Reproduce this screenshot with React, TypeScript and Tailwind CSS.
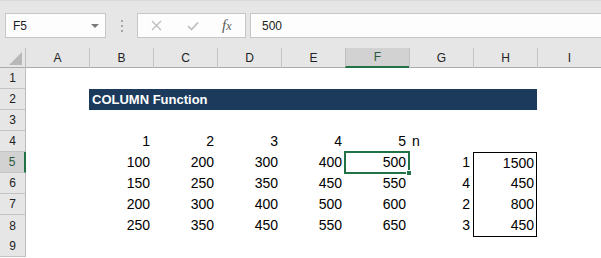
import React from "react";

const COLS = ["A", "B", "C", "D", "E", "F", "G", "H", "I"];

// A..I values for the rows below the title band
const DATA: Record<number, string[]> = {
  4: ["", "1", "2", "3", "4", "5", "n", "", ""],
  5: ["", "100", "200", "300", "400", "500", "1", "1500", ""],
  6: ["", "150", "250", "350", "450", "550", "4", "450", ""],
  7: ["", "200", "300", "400", "500", "600", "2", "800", ""],
  8: ["", "250", "350", "450", "550", "650", "3", "450", ""],
};

const GRID = "grid grid-cols-[26px_63px_64px_64px_64px_64px_64px_64px_64px_64px]";

function FormulaBar() {
  return (
    <div className="flex items-start pt-[12px] h-[48px] bg-[#e6e6e6] border-t border-[#d9d9d9]">
      {/* Name box */}
      <div className="ml-[5px] w-[101px] h-[25px] bg-[#fdfdfd] border border-[#c6c6c6] flex items-center justify-between pl-[7px] pr-[6px]">
        <span className="text-[12px] text-[#222]">F5</span>
        <svg width="8" height="4" viewBox="0 0 8 4">
          <polygon points="0,0 8,0 4,4" fill="#7a7a7a" />
        </svg>
      </div>

      <div className="w-[31px] h-[25px] flex flex-col items-center justify-center gap-[3px]">
        <span className="w-[2px] h-[2px] bg-[#a6a6a6]" />
        <span className="w-[2px] h-[2px] bg-[#a6a6a6]" />
        <span className="w-[2px] h-[2px] bg-[#a6a6a6]" />
      </div>

      {/* Cancel / enter / insert function */}
      <div className="w-[109px] h-[25px] bg-[#fdfdfd] border border-[#c6c6c6] flex items-center">
        <svg className="ml-[13px]" width="11" height="11" viewBox="0 0 11 11">
          <path d="M1 1 L10 10 M10 1 L1 10" stroke="#bcbcbc" strokeWidth="1.3" />
        </svg>
        <svg className="ml-[25px]" width="12" height="10" viewBox="0 0 12 10">
          <path d="M1 5 L4.5 8.5 L11 1.5" stroke="#bcbcbc" strokeWidth="1.6" fill="none" />
        </svg>
        <span className="ml-[23px] text-[15px] italic text-[#5a5a5a] font-['Liberation_Serif',serif] leading-none">
          f<span className="text-[12px]">x</span>
        </span>
      </div>

      <div className="ml-[4px] flex-1 h-[25px] bg-[#fdfdfd] border border-r-0 border-[#c6c6c6] flex items-center pl-[11px]">
        <span className="text-[12px] text-[#222]">500</span>
      </div>
    </div>
  );
}

function ColumnHeader() {
  return (
    <div className={`${GRID} h-[20px] bg-[#e6e6e6] border-b border-[#ababab]`}>
      <div className="relative border-r border-[#bdbdbd]">
        <svg className="absolute right-[3px] bottom-[3px]" width="13" height="13" viewBox="0 0 13 13">
          <polygon points="13,0 13,13 0,13" fill="#b8b8b8" />
        </svg>
      </div>
      {COLS.map((c) =>
        c === "F" ? (
          <div
            key={c}
            className="flex items-center justify-center bg-[#d2d2d2] border-l border-[#bdbdbd] border-b-2 border-b-[#217346] text-[12px] text-[#2b5a3f]"
          >
            {c}
          </div>
        ) : (
          <div
            key={c}
            className={`flex items-center justify-center text-[12px] text-[#222] ${c === "A" ? "" : "border-l border-[#c4c4c4]"}`}
          >
            {c}
          </div>
        )
      )}
    </div>
  );
}

function RowHeader({ n }: { n: number }) {
  if (n === 5) {
    return (
      <div className="flex items-center justify-center bg-[#d2d2d2] border-b border-[#c4c4c4] border-r-2 border-r-[#217346] text-[12px] text-[#2b5a3f]">
        {n}
      </div>
    );
  }
  return (
    <div className="flex items-center justify-center bg-[#e6e6e6] border-b border-[#c4c4c4] border-r border-r-[#bdbdbd] text-[12px] text-[#222]">
      {n}
    </div>
  );
}

function DataRow({ n }: { n: number }) {
  const vals = DATA[n] ?? COLS.map(() => "");
  return (
    <div className={`${GRID} h-[21px]`}>
      <RowHeader n={n} />
      {vals.map((v, i) => {
        const col = COLS[i];
        if (col === "G" && n === 4) {
          return (
            <div key={col} className="pl-[3px] leading-[21px]">
              {v}
            </div>
          );
        }
        if (col === "F" && n === 5) {
          return (
            <div key={col} className="relative text-right pr-[3px] leading-[21px]">
              {v}
              <div className="absolute -inset-[1px] border-2 border-[#217346]" />
              <div className="absolute -right-[3px] -bottom-[3px] w-[6px] h-[6px] bg-[#217346] border border-white" />
            </div>
          );
        }
        if (col === "H" && n >= 5 && n <= 8) {
          const edge =
            n === 5
              ? "border-x border-t border-black leading-[20px]"
              : n === 8
              ? "border-x border-b border-black leading-[21px]"
              : "border-x border-black leading-[21px]";
          return (
            <div key={col} className={`text-right pr-[2px] ${edge}`}>
              {v}
            </div>
          );
        }
        return (
          <div key={col} className="text-right pr-[3px] leading-[21px]">
            {v}
          </div>
        );
      })}
    </div>
  );
}

function TitleRow() {
  return (
    <div className={`${GRID} h-[21px]`}>
      <RowHeader n={2} />
      <div />
      <div className="col-span-7 bg-[#1b3a5c] flex items-center pl-[3px] text-[13px] font-bold text-white">
        COLUMN Function
      </div>
      <div />
    </div>
  );
}

export default function App() {
  return (
    <div className="w-[601px] h-[258px] overflow-hidden bg-white font-['Liberation_Sans',Arial,sans-serif] text-[14px] text-black">
      <FormulaBar />
      <ColumnHeader />
      <DataRow n={1} />
      <TitleRow />
      {[3, 4, 5, 6, 7, 8, 9].map((n) => (
        <DataRow key={n} n={n} />
      ))}
    </div>
  );
}
